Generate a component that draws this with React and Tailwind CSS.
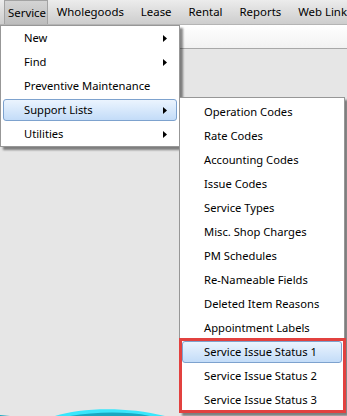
import React from "react";

const Arrow = () => (
  <svg width="4" height="7" viewBox="0 0 4 7" className="block">
    <path d="M0 0 L4 3.5 L0 7 Z" fill="#000" />
  </svg>
);

const main = [
  { label: "New", sub: true },
  { label: "Find", sub: true },
  { label: "Preventive Maintenance" },
  { label: "Support Lists", sub: true, active: true },
  { label: "Utilities", sub: true },
];

const subItems = [
  "Operation Codes",
  "Rate Codes",
  "Accounting Codes",
  "Issue Codes",
  "Service Types",
  "Misc. Shop Charges",
  "PM Schedules",
  "Re-Nameable Fields",
  "Deleted Item Reasons",
  "Appointment Labels",
  "Service Issue Status 1",
  "Service Issue Status 2",
  "Service Issue Status 3",
];

export default function App() {
  return (
    <div
      className="relative w-[347px] h-[416px] overflow-hidden bg-[#e6e6e6] text-[11.2px] text-black"
      style={{ fontFamily: '"Noto Sans", "Open Sans", sans-serif' }}
    >
      {/* menu bar */}
      <div className="flex items-stretch h-[25px] pl-[4px] text-[11.4px] bg-gradient-to-b from-[#ececec] to-[#cdcdcd] border-b border-[#b4b4b4] whitespace-nowrap">
        <div className="w-[49px] pl-[3px] flex items-center border-x border-t border-[#a3a3a3] bg-gradient-to-b from-[#d4d4d4] to-[#bdbdbd]">
          Service
        </div>
        <div className="ml-[9px] mr-[17px] flex items-center">Wholegoods</div>
        <div className="mr-[17px] flex items-center">Lease</div>
        <div className="mr-[17px] flex items-center">Rental</div>
        <div className="mr-[17px] flex items-center">Reports</div>
        <div className="flex items-center">Web Link</div>
      </div>
      {/* white strip */}
      <div className="h-[24px] bg-gradient-to-b from-[#ffffff] to-[#f2f2f2] border-b border-[#a8a8a8]" />

      {/* main dropdown */}
      <div className="absolute left-0 top-[25px] w-[180px] bg-white border border-[#979797] shadow-[3px_3px_2px_rgba(0,0,0,0.45)]">
        {main.map((m) => (
          <div key={m.label} className="relative h-[24px] flex items-center">
            {m.active && (
              <div className="absolute left-[2px] right-[2px] top-[1px] bottom-[1px] rounded-[3px] border border-[#7da2ce] bg-gradient-to-b from-[#ebf4fe] to-[#c3dcf8]" />
            )}
            <span className="relative pl-[23px] whitespace-nowrap">{m.label}</span>
            {m.sub && (
              <span className="absolute left-[162px] top-[9px]">
                <Arrow />
              </span>
            )}
          </div>
        ))}
      </div>

      {/* submenu */}
      <div className="absolute left-[179px] top-[97px] w-[166px] bg-white border border-[#979797] pt-[2px] shadow-[3px_3px_2px_rgba(0,0,0,0.45)]">
        {subItems.map((s, i) => (
          <div key={s} className="relative h-[24px] flex items-center">
            {i === 10 && (
              <div className="absolute left-[2px] right-[2px] top-[1px] bottom-[1px] rounded-[3px] border border-[#7da2ce] bg-gradient-to-b from-[#ebf4fe] to-[#c3dcf8]" />
            )}
            <span className="relative pl-[24px] whitespace-nowrap">{s}</span>
          </div>
        ))}
      </div>
      {/* red highlight box */}
      <div className="absolute left-[179px] top-[338px] w-[167px] h-[75px] border-[3px] border-[#e2413f]" />

      {/* decorative wave */}
      <svg className="absolute left-0 bottom-0" width="200" height="12" viewBox="0 0 200 12">
        <path d="M55 12 C80 4 125 2 165 12 Z" fill="#3ae6fb" />
        <path d="M70 12 C95 8 125 7 150 12 Z" fill="#1aa7c0" />
        <path d="M0 11 L10 12 L0 12 Z" fill="#1aa7c0" />
      </svg>
    </div>
  );
}
